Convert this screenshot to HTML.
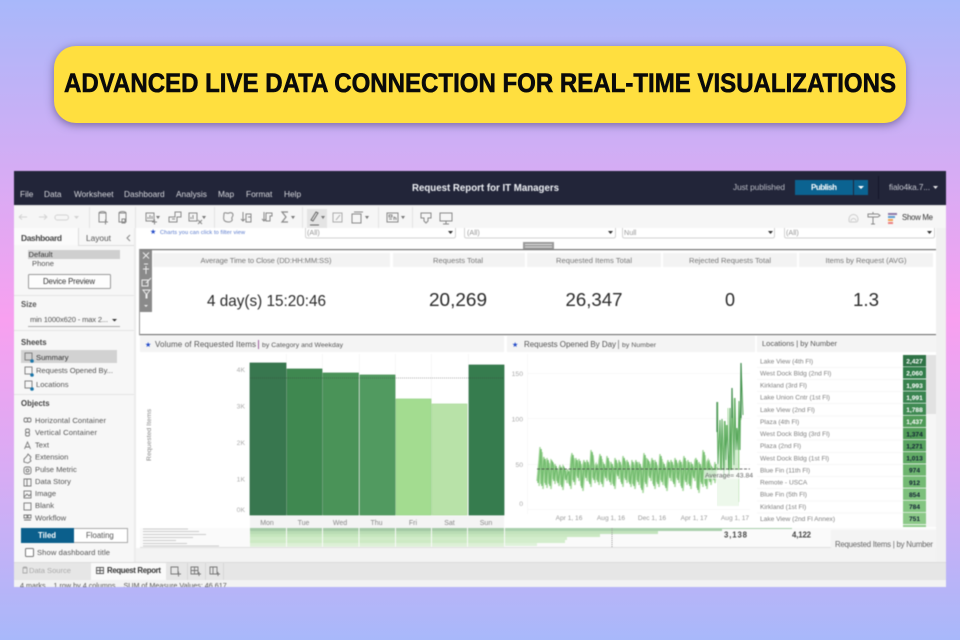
<!DOCTYPE html>
<html><head><meta charset="utf-8"><title>Advanced live data connection</title>
<style>
html,body{margin:0;padding:0;width:960px;height:640px;overflow:hidden}
body{background:linear-gradient(180deg,#a8b8fa 0%,#d6acf4 27%,#f8a0f0 50%,#d6acf4 75%,#a8b8fa 100%);position:relative;font-family:"Liberation Sans",sans-serif}
#banner{position:absolute;left:54px;top:46px;width:852px;height:77px;border-radius:22px;background:#ffdf3f;box-shadow:0 2px 9px rgba(50,40,90,.55)}
svg{position:absolute;left:0;top:0}
text{font-family:"Liberation Sans",sans-serif}
.m{fill:#d8d9de;font-size:8.3px}
.g{fill:#555;font-size:7.6px}
.d{fill:#333;font-size:7.6px}
.k{fill:#777;font-size:7.6px;text-anchor:middle}
.v{fill:#2a2a2a;font-size:18px;text-anchor:middle}
.a{fill:#aaa;font-size:6.8px;text-anchor:end}
.w{fill:#888;font-size:7px;text-anchor:middle}
.x{fill:#999;font-size:6.6px;text-anchor:middle}
.l{fill:#808080;font-size:6.6px}
.n{font-size:6.6px;font-weight:bold;text-anchor:middle}
.i{fill:none;stroke:#888;stroke-width:1}
.o{fill:none;stroke:#777;stroke-width:.9}
</style></head><body>
<div id="banner"></div>
<svg width="960" height="640" viewBox="0 0 960 640">
<text x="64" y="92" textLength="832" lengthAdjust="spacingAndGlyphs" style="font-size:26.500px;font-weight:bold;fill:#0a0a0a;stroke:#0a0a0a;stroke-width:.6">ADVANCED LIVE DATA CONNECTION FOR REAL-TIME VISUALIZATIONS</text>

<g style="filter:blur(.45px)">
<rect x="14" y="171" width="932" height="416" fill="#f3f3f3"/>
<rect x="14" y="171" width="932" height="34" fill="#222539"/>
<g>
<text class="m" x="20" y="197">File</text><text class="m" x="44" y="197">Data</text><text class="m" x="74" y="197">Worksheet</text><text class="m" x="124" y="197">Dashboard</text><text class="m" x="176" y="197">Analysis</text><text class="m" x="218" y="197">Map</text><text class="m" x="246" y="197">Format</text><text class="m" x="284" y="197">Help</text>
<text x="412" y="191" textLength="147" lengthAdjust="spacingAndGlyphs" style="font-size:10.5px;font-weight:bold;fill:#eef0f4">Request Report for IT Managers</text>
<text x="733" y="190" textLength="52" style="font-size:8.3px;fill:#b9bbc4">Just published</text>
<rect x="795" y="180" width="58" height="15" fill="#0b6391"/><rect x="854" y="180" width="14" height="15" fill="#0b6391"/>
<text x="811" y="190" textLength="26" style="font-size:8px;font-weight:bold;fill:#fff">Publish</text>
<path d="M858 186h6l-3 3z" fill="#fff"/>
<rect x="878" y="176" width="1" height="23" fill="#14162a"/>
<text x="889" y="190" textLength="41" style="font-size:8.2px;fill:#c8cad2">fialo4ka.7...</text>
<path d="M933 186h5l-2.500 3z" fill="#e4e4e8"/>
</g>
<rect x="14" y="205" width="932" height="23" fill="#f6f6f6"/>
<rect x="14" y="205" width="932" height="1" fill="#e8e8e8"/>
<g fill="#e3e3e3"><rect x="89" y="207" width="1" height="21"/><rect x="135" y="207" width="1" height="21"/><rect x="214" y="207" width="1" height="21"/><rect x="302" y="207" width="1" height="21"/><rect x="378" y="207" width="1" height="21"/><rect x="412" y="207" width="1" height="21"/></g>
<rect x="307" y="209" width="20" height="19" fill="#e4e4e4"/>
<g class="i" style="stroke:#d2d2d2">
<path d="M19 217h8M19 217l3-2.500M19 217l3 2.500M39 217h8M47 217l-3-2.500M47 217l-3 2.500M57 215h9a2 2 0 0 1 0 5h-8a2 2 0 0 1-1-5"/>
</g>
<path d="M74 216h5l-2.500 3z" fill="#d2d2d2"/>
<g class="i">
<path d="M99 213h7v9h-7zM99 213a3.500 1.500 0 0 1 7 0M103 222h5M105.500 219.500v5"/>
<path d="M119 213h7v9h-7zM119 213a3.500 1.500 0 0 1 7 0M122 219h3v4h-3z"/>
<path d="M146 213h8v8h-8zM148 219v-2M150 219v-4M152 219v-3M152 222h5M154.500 219.500v5"/>
<path d="M169 217h6v-5h6v5h-4v5h-8zM172 219h3"/>
<path d="M189 213h8v8h-8zM191 219v-2M193 219v-4M198 220l4 4M202 220l-4 4"/>
<path d="M224 213c2-1 3 1 5 0s4 0 4 2-2 2-1 4-2 3-3 3-4 0-5-2 0-3 0-7"/>
<path d="M243 212v9M241 219l2 2 2-2M246 214h5v8h-5zM248 217h3"/>
<path d="M264 212v9M262 219l2 2 2-2M266 213h6v3h-2v5h-4z"/>
<path d="M288 212h-6l4 5-4 5h6" stroke-width="1.200"/>
<path d="M311 220l5-8 2 1-5 8zM310 225h9" stroke="#666"/>
<path d="M333 213h9v9h-9zM336 220l4-5" stroke="#aaa"/>
<path d="M352 214h9v9h-9zM354 212h9"/>
<path d="M387 213h11v9h-11zM389 215h3v2h-3zM389 219h3M394 220v-3l2 1v2"/>
<path d="M421 213h10v5h-3v3l-2 2-2-2v-3h-3z"/>
<path d="M440 213h12v8h-12zM446 221v3M443 224h6"/>
<path d="M849 219a4.500 4.500 0 0 1 9 0c0 2-1 3-2 3h-6c-1 0-1-1-1-3zM851 221a2.500 2.500 0 0 1 5 0" stroke="#ccc"/>
<path d="M868 214h10l2 1.500-2 1.500h-10zM873 212v2M873 217v7M871 224h4"/>
</g>
<g fill="#777"><path d="M156 216h4l-2 3zM202 216h4l-2 3zM291 216h4l-2 3zM321 216h4l-2 3zM365 216h4l-2 3zM401 216h4l-2 3z"/></g>
<rect x="888" y="213" width="9" height="2" fill="#8c78a8"/><rect x="888" y="216" width="7" height="2" fill="#5b9bd0"/><rect x="888" y="219" width="5" height="2" fill="#f0a050"/><rect x="888" y="222" width="5" height="2" fill="#ec8080"/>
<text x="902" y="220" textLength="31" class="d" style="font-size:7.800px">Show Me</text>

<rect x="14" y="228" width="121" height="334" fill="#f7f7f7"/>
<rect x="134" y="228" width="2" height="334" fill="#ececec"/>
<rect x="14" y="228" width="64" height="17" fill="#fbfbfb"/>
<rect x="78" y="228" width="1" height="17" fill="#ddd"/>
<rect x="78" y="245" width="56" height="1" fill="#ddd"/>
<text x="21" y="241" textLength="41" style="font-size:8.400px;font-weight:bold;fill:#444">Dashboard</text>
<text x="86" y="241" textLength="25" style="font-size:8.400px;fill:#555">Layout</text>
<path d="M130 235l-3 3 3 3" class="i"/>
<rect x="28" y="250" width="92" height="9" fill="#cfcfcf"/>
<text class="d" x="28.500" y="257">Default</text><text class="g" x="32" y="266">Phone</text>
<rect x="28.500" y="274.500" width="82" height="14" rx="1" fill="#fdfdfd" stroke="#999"/>
<text x="43" y="284" textLength="52" style="font-size:7.800px;fill:#333">Device Preview</text>
<rect x="14" y="295" width="120" height="1" fill="#e4e4e4"/>
<text x="21" y="307" style="font-size:7.800px;font-weight:bold;fill:#555">Size</text>
<text class="g" x="30" y="322" textLength="78">min 1000x620 - max 2...</text>
<path d="M112 319h5l-2.500 2.500z" fill="#333"/>
<rect x="28" y="326" width="92" height="1" fill="#aaa"/>
<rect x="14" y="330" width="120" height="1" fill="#e4e4e4"/>
<text x="21" y="345" style="font-size:7.800px;font-weight:bold;fill:#444">Sheets</text>
<rect x="21" y="350" width="96" height="13" fill="#d2d2d2"/>
<text class="d" x="36" y="360">Summary</text><text class="g" x="36" y="373" textLength="77">Requests Opened By...</text><text class="g" x="36" y="387">Locations</text>
<g class="o"><rect x="25" y="353" width="7" height="7"/><rect x="25" y="367" width="7" height="7"/><rect x="25" y="381" width="7" height="7"/></g>
<circle cx="32" cy="361" r="1.800" fill="#1a75a8"/><circle cx="32" cy="375" r="1.800" fill="#1a75a8"/><circle cx="32" cy="389" r="1.800" fill="#1a75a8"/>
<rect x="14" y="394" width="120" height="1" fill="#e4e4e4"/>
<text x="21" y="406" style="font-size:7.800px;font-weight:bold;fill:#444">Objects</text>
<g class="g">
<text x="35" y="423" textLength="71">Horizontal Container</text><text x="35" y="435" textLength="62">Vertical Container</text><text x="35" y="447.500">Text</text><text x="35" y="459.500">Extension</text><text x="35" y="472">Pulse Metric</text><text x="35" y="484">Data Story</text><text x="35" y="496">Image</text><text x="35" y="508">Blank</text><text x="35" y="520.500">Workflow</text>
</g>
<g class="o">
<rect x="24" y="418" width="3.500" height="4" rx="1.500"/><rect x="27.500" y="418" width="3.500" height="4" rx="1.500"/>
<rect x="25.500" y="429" width="4" height="3.500" rx="1.500"/><rect x="25.500" y="432.500" width="4" height="3.500" rx="1.500"/>
<path d="M24.500 449l3-7 3 7M25.500 447h4"/>
<path d="M24 459l3-3 1-2 3 3-1 2 1 2-3 2-4-1z"/>
<rect x="24" y="467" width="7" height="7" rx="2"/><circle cx="27.500" cy="470.500" r="1.500"/>
<path d="M24 479h3v7h-3zM27 479h4v7h-4z"/>
<rect x="24" y="491" width="7" height="7"/><path d="M24 497l3-3 2 2 2-2"/>
<rect x="24" y="503" width="7" height="7"/>
<path d="M24 515h3v3h-3zM28 515h3v3h-3zM24 520h7"/>
</g>
<rect x="21.500" y="528.500" width="106" height="14" fill="#fff" stroke="#aaa"/>
<rect x="21" y="528" width="53" height="15" fill="#0b5f8c"/>
<text x="38" y="538" style="font-size:7.800px;font-weight:bold;fill:#fff">Tiled</text>
<text x="86" y="538" style="font-size:7.800px;fill:#555">Floating</text>
<rect x="25.500" y="548.500" width="8" height="8" rx="1" fill="#fff" stroke="#777"/>
<text class="g" x="37" y="555" textLength="73">Show dashboard title</text>

<rect x="14" y="562" width="932" height="18" fill="#e6e6e6"/>
<rect x="14" y="562" width="932" height="1" fill="#dcdcdc"/>
<rect x="14" y="580" width="932" height="7" fill="#f3f3f3"/>
<rect x="91" y="563" width="75" height="17" fill="#fafafa"/>
<text x="29" y="573" textLength="42" style="font-size:7.600px;fill:#aaa">Data Source</text>
<path d="M23 568h4v5h-4zM23 568a2 1 0 0 1 4 0" class="o" style="stroke:#aaa"/>
<path d="M96.500 567.500h7v6h-7zM100 567.500v6M96.500 570.500h7" class="o" style="stroke:#555"/>
<text x="107" y="573" textLength="54" style="font-size:7.800px;font-weight:bold;fill:#333">Request Report</text>
<g class="o"><path d="M171 567h7v7h-7zM176 574h5M178.500 571.500v5"/><path d="M191 567h7v7h-7zM194.500 567v7M191 570.500h7M197 574h4M199 572v4"/><path d="M210 567h3v7h-3zM213 567h4v7h-4zM216 574h4M218 572v4"/></g>
<g fill="#d6d6d6"><rect x="187" y="563" width="1" height="17"/><rect x="205" y="563" width="1" height="17"/><rect x="223" y="563" width="1" height="17"/></g>
<svg x="14" y="580" width="400" height="7" viewBox="14 580 400 7"><text x="20" y="588" style="font-size:7.200px;fill:#555" xml:space="preserve">4 marks    1 row by 4 columns    SUM of Measure Values: 46,617</text></svg>

<rect x="136" y="228" width="800" height="320" fill="#fff"/>
<rect x="936" y="228" width="10" height="334" fill="#f1f1f1"/>
<text x="150" y="234" style="font-size:6.800px;fill:#1f48c8">★</text>
<text x="160" y="234" textLength="85" style="font-size:5.600px;fill:#5577cc">Charts you can click to filter view</text>
<g fill="none" stroke="#d2d2d2"><path d="M305.500 228v8q0 2 2 2h146q2 0 2-2v-8M464.500 228v8q0 2 2 2h147q2 0 2-2v-8M622.500 228v8q0 2 2 2h148q2 0 2-2v-8M784.500 228v8q0 2 2 2h146q2 0 2-2v-8"/></g>
<g style="font-size:7.200px;fill:#999"><text x="307" y="235">(All)</text><text x="467" y="235">(All)</text><text x="624" y="235">Null</text><text x="786" y="235">(All)</text></g>
<path d="M448 231h5l-2.500 3zM608 231h5l-2.500 3zM768 231h5l-2.500 3zM927 231h5l-2.500 3z" fill="#333"/>
<rect x="523" y="242" width="31" height="7" fill="#9a9a9a"/><rect x="525" y="244" width="27" height="1" fill="#ddd"/><rect x="525" y="246.500" width="27" height="1" fill="#ddd"/>

<rect x="139" y="249" width="797" height="1.200" fill="#777"/>
<rect x="139" y="334" width="797" height="1.200" fill="#777"/>
<rect x="139" y="249" width="1" height="86" fill="#999"/>
<rect x="140" y="250" width="12" height="62" fill="#8a8a8a"/>
<g fill="none" stroke="#eee" stroke-width="1"><path d="M143 252.500l6 6M149 252.500l-6 6M146 266v8M143 269h6M144 264h4M142 280h6v6h-6zM146 283l5-5M143 290h7l-3 4v4l-1 0v-4z"/></g>
<path d="M144 305h4l-2 2z" fill="#eee"/>
<g fill="#f3f3f3"><rect x="153" y="253" width="237" height="14"/><rect x="393" y="253" width="132" height="14"/><rect x="527" y="253" width="134" height="14"/><rect x="663" y="253" width="134" height="14"/><rect x="799" y="253" width="134" height="14"/></g>
<text class="k" x="266" y="263" textLength="131">Average Time to Close (DD:HH:MM:SS)</text>
<text class="k" x="458" y="263" textLength="50">Requests Total</text>
<text class="k" x="594" y="263" textLength="76">Requested Items Total</text>
<text class="k" x="730" y="263" textLength="82">Rejected Requests Total</text>
<text class="k" x="866" y="263" textLength="81">Items by Request (AVG)</text>
<text class="v" x="266.500" y="306" textLength="119" lengthAdjust="spacingAndGlyphs" style="font-size:16px">4 day(s) 15:20:46</text>
<text class="v" x="458" y="306" textLength="58" lengthAdjust="spacingAndGlyphs">20,269</text>
<text class="v" x="594" y="306" textLength="57" lengthAdjust="spacingAndGlyphs">26,347</text>
<text class="v" x="730" y="306">0</text>
<text class="v" x="866" y="306" textLength="26" lengthAdjust="spacingAndGlyphs">1.3</text>

<g fill="#f4f4f4"><rect x="140" y="336" width="364" height="16"/><rect x="507" y="336" width="248" height="16"/><rect x="757" y="336" width="179" height="16"/></g>
<text x="145" y="347" style="font-size:7px;fill:#1f48c8">★</text>
<text x="155" y="347" textLength="101" style="font-size:8px;fill:#555">Volume of Requested Items</text>
<rect x="258" y="340" width="1" height="9" fill="#a060a0"/>
<text x="262" y="347" textLength="81" style="font-size:6.800px;fill:#555">by Category and Weekday</text>
<text x="512" y="347" style="font-size:7px;fill:#1f48c8">★</text>
<text x="524" y="347" textLength="92" style="font-size:8px;fill:#555">Requests Opened By Day</text>
<rect x="618" y="340" width="1" height="9" fill="#999"/>
<text x="622" y="347" textLength="34" style="font-size:6.800px;fill:#555">by Number</text>
<text x="762" y="346" textLength="75" style="font-size:7.500px;fill:#555">Locations | by Number</text>

<g fill="#f4f4f4"><rect x="286" y="354" width=".7" height="162"/><rect x="322" y="354" width=".7" height="162"/><rect x="359" y="354" width=".7" height="162"/><rect x="395" y="354" width=".7" height="162"/><rect x="431" y="354" width=".7" height="162"/><rect x="468" y="354" width=".7" height="162"/></g>
<rect x="250" y="363" width="36" height="152" fill="#38774f" stroke="#2a6a40" stroke-width=".7"/>
<rect x="287" y="369" width="35" height="146" fill="#3f8850" stroke="#357c46" stroke-width=".7"/>
<rect x="323" y="373" width="35.500" height="142" fill="#4a9358" stroke="#3f884e" stroke-width=".7"/>
<rect x="360" y="375" width="35" height="140" fill="#519a60" stroke="#428c50" stroke-width=".7"/>
<rect x="396" y="399" width="35" height="116" fill="#a3dc90" stroke="#90cf80" stroke-width=".7"/>
<rect x="432" y="404" width="35" height="111" fill="#b8e2a8" stroke="#a8d898" stroke-width=".7"/>
<rect x="469" y="365" width="35" height="150" fill="#367c4e" stroke="#2a6e42" stroke-width=".7"/>
<path d="M250 378h254" stroke="#333" stroke-opacity=".4" stroke-dasharray="1 1" fill="none"/>
<text class="a" x="245" y="372">4K</text><text class="a" x="245" y="408.500">3K</text><text class="a" x="245" y="445">2K</text><text class="a" x="245" y="481.500">1K</text><text class="a" x="245" y="512">0K</text>
<text transform="translate(151,435) rotate(-90)" text-anchor="middle" style="font-size:6.800px;fill:#888" textLength="52">Requested Items</text>
<rect x="250" y="516" width="254" height="12" fill="#f4f4f4"/>
<text class="w" x="267" y="525">Mon</text><text class="w" x="303.500" y="525">Tue</text><text class="w" x="340" y="525">Wed</text><text class="w" x="376.500" y="525">Thu</text><text class="w" x="413" y="525">Fri</text><text class="w" x="449.500" y="525">Sat</text><text class="w" x="486" y="525">Sun</text>

<rect x="140" y="528" width="796" height="19.500" fill="#fafafa"/>
<rect x="140" y="547" width="796" height="1" fill="#e0e0e0"/>
<g fill="#ccc"><rect x="143" y="528.500" width="45" height="1"/><rect x="143" y="531" width="56" height="1"/><rect x="143" y="534" width="63" height="1"/><rect x="143" y="537" width="50" height="1"/><rect x="143" y="540" width="33" height="1"/><rect x="143" y="543" width="44" height="1"/><rect x="143" y="545.500" width="76" height="1"/></g>
<rect x="250" y="528" width="254" height="3" fill="#a3c9a5"/><rect x="250" y="531" width="254" height="3" fill="#b9dcb4"/><rect x="250" y="534" width="254" height="3" fill="#c5e6bd"/><rect x="250" y="537" width="254" height="3" fill="#d0ebc8"/><rect x="250" y="540" width="254" height="3" fill="#cdeac4"/><rect x="250" y="543" width="254" height="3" fill="#dcf0d5"/><rect x="250" y="546" width="254" height="1" fill="#e6f4e0"/>
<g fill="#fafafa"><rect x="286" y="528" width="1" height="19"/><rect x="322" y="528" width="1" height="19"/><rect x="358.500" y="528" width="1" height="19"/><rect x="395" y="528" width="1" height="19"/><rect x="431" y="528" width="1" height="19"/><rect x="467" y="528" width="1" height="19"/></g>
<rect x="505" y="528" width="217" height="3" fill="#a9d0ac"/><rect x="505" y="531" width="153" height="3" fill="#c3e3bd"/><rect x="505" y="534" width="95" height="3" fill="#cbe8c3"/><rect x="505" y="537" width="62" height="3" fill="#d3edcc"/><rect x="505" y="540" width="60" height="3" fill="#d3edcc"/><rect x="505" y="543" width="32" height="3" fill="#dff2da"/>
<path d="M612 528v19" stroke="#999" stroke-dasharray="1 1"/>
<rect x="722" y="530" width="110" height="17" fill="#fafafa"/>
<rect x="722" y="528" width="70" height="1" fill="#a9d0ac"/>
<text x="724" y="537.500" textLength="23" style="font-size:7.800px;font-weight:bold;fill:#444">3,138</text>
<text x="792" y="537.500" textLength="19" style="font-size:7.800px;font-weight:bold;fill:#444">4,122</text>
<rect x="831" y="530" width="105" height="18" fill="#f4f4f4"/>
<text x="835" y="547" textLength="98" style="font-size:7.800px;fill:#666">Requested Items | by Number</text>

<g fill="#f8f8f8"><rect x="527" y="373" width="223" height="1"/><rect x="527" y="418" width="223" height="1"/><rect x="527" y="464" width="223" height="1"/><rect x="527" y="509" width="223" height="1"/></g>
<rect x="527" y="354" width="1" height="160" fill="#f8f8f8"/>
<text class="a" x="523" y="376">150</text><text class="a" x="523" y="421.500">100</text><text class="a" x="523" y="467">50</text><text class="a" x="523" y="506">0</text>
<text class="x" x="569" y="520">Apr 1, 16</text><text class="x" x="611" y="520">Aug 1, 16</text><text class="x" x="652" y="520">Dec 1, 16</text><text class="x" x="694" y="520">Apr 1, 17</text><text class="x" x="735" y="520">Aug 1, 17</text>
<defs><polyline id="ln" fill="none" points="538,483 540,462 541,449 542,486 544,461 545,459 546,485 548,460 549,470 550,486 552,462 553,463 554,481 556,466 557,472 558,483 560,470 561,467 562,487 564,468 565,470 566,480 568,472 569,472 570,486 572,460 573,455 574,482 576,464 577,460 578,478 580,461 581,470 582,488 584,466 585,462 586,478 588,462 589,470 590,484 592,452 593,462 594,480 596,468 597,466 598,482 600,462 601,456 602,484 604,464 605,470 606,478 608,458 609,470 610,482 612,464 613,470 614,486 616,460 617,468 618,476 620,462 621,470 622,484 624,458 625,464 626,480 628,462 629,468 630,484 632,470 633,462 634,486 636,466 637,462 638,482 640,464 641,470 642,490 644,466 645,455 646,484 648,461 649,462 650,478 652,466 653,460 654,486 656,462 657,470 658,484 660,468 661,456 662,482 664,464 665,470 666,488 668,466 669,462 670,478 672,462 673,470 674,484 676,460 677,466 678,480 680,464 681,462 682,488 684,466 685,458 686,482 688,470 689,462 690,486 692,464 693,470 694,478 696,462 697,460 698,490 700,464 701,470 702,484 704,452 705,470 706,486 708,464 709,462 710,482 712,468 713,470 714,480 716,464"/></defs>
<use href="#ln" transform="translate(1,3)" stroke="#b0dea8" stroke-width="1.600"/>
<use href="#ln" transform="translate(-1,-2)" stroke="#a0d598" stroke-width="1.300"/>
<use href="#ln" stroke="#74bd70" stroke-width="1.400"/>
<path d="M718 470V506M720 470V506M722 470V506M724 478V506M726 470V506M728 470V506M730 470V506M732 470V506M734 470V506M736 470V506M738 470V506M739 470V502" fill="none" stroke="#d8efd3" stroke-width=".9"/>
<path d="M718 402V470M720 420V470M722 419V470M724 421V470M726 425V470M728 408V470M730 418V470M732 388V470M734 398V470M736 428V470M738 430V470M739 401V470M741 363V420" fill="none" stroke="#a8dba0" stroke-width="1"/>
<polyline fill="none" stroke="#5aa95d" stroke-width="1" points="717,402 718,464 720,420 721,470 722,419 724,478 725,421 726,460 727,425 729,475 730,408 731,470 732,388 734,465 735,398 736,450 737,428 738,450 739,401 740,450 741,363 743,415"/>
<path d="M741 363v55M732 388v30M717 402v30" stroke="#3d8a4c" stroke-width="1.200" fill="none"/>
<path d="M537 469h213" stroke="#444" stroke-opacity=".75" stroke-dasharray="3 1.500" fill="none"/>
<rect x="704" y="470" width="48" height="9" fill="#fff" fill-opacity=".6"/>
<text x="705" y="477.500" textLength="48" style="font-size:6.800px;fill:#666">Average= 43.84</text>

<rect x="926" y="355" width="10" height="59" fill="#e2e2e2"/>
<rect x="926" y="414" width="10" height="113" fill="#f6f6f6"/>
<g fill="#f4f4f4"><rect x="757" y="367" width="146" height=".8"/><rect x="757" y="379" width="146" height=".8"/><rect x="757" y="391" width="146" height=".8"/><rect x="757" y="403" width="146" height=".8"/><rect x="757" y="415.500" width="146" height=".8"/><rect x="757" y="427.500" width="146" height=".8"/><rect x="757" y="439.500" width="146" height=".8"/><rect x="757" y="452" width="146" height=".8"/><rect x="757" y="464" width="146" height=".8"/><rect x="757" y="476" width="146" height=".8"/><rect x="757" y="488" width="146" height=".8"/><rect x="757" y="500.500" width="146" height=".8"/><rect x="757" y="512.500" width="146" height=".8"/></g>
<rect x="903" y="355" width="23" height="172" fill="#fff"/>
<rect x="903" y="355" width="23" height="11.500" fill="#2f7346"/><rect x="903" y="367" width="23" height="11.500" fill="#317d4a"/><rect x="903" y="379.300" width="23" height="11.500" fill="#38824e"/><rect x="903" y="391.400" width="23" height="11.500" fill="#3a8450"/><rect x="903" y="403.500" width="23" height="11.500" fill="#3f8a52"/><rect x="903" y="415.600" width="23" height="11.500" fill="#4f9a58"/><rect x="903" y="427.800" width="23" height="11.500" fill="#519c58"/><rect x="903" y="439.900" width="23" height="11.500" fill="#58a35f"/><rect x="903" y="452" width="23" height="11.500" fill="#62ab66"/><rect x="903" y="464.200" width="23" height="11.500" fill="#6eb56f"/><rect x="903" y="476.300" width="23" height="11.500" fill="#74ba74"/><rect x="903" y="488.500" width="23" height="11.500" fill="#7dc07c"/><rect x="903" y="500.600" width="23" height="11.500" fill="#84c582"/><rect x="903" y="512.700" width="23" height="11.500" fill="#8cc988"/><rect x="903" y="525" width="23" height="2" fill="#90cc8c"/>
<g class="l"><text x="760" y="363.500">Lake View (4th Fl)</text><text x="760" y="375.500">West Dock Bldg (2nd Fl)</text><text x="760" y="387.500">Kirkland (3rd Fl)</text><text x="760" y="399.700">Lake Union Cntr (1st Fl)</text><text x="760" y="411.800">Lake View (2nd Fl)</text><text x="760" y="424">Plaza (4th Fl)</text><text x="760" y="436">West Dock Bldg (3rd Fl)</text><text x="760" y="448">Plaza (2nd Fl)</text><text x="760" y="460.300">West Dock Bldg (1st Fl)</text><text x="760" y="472.500">Blue Fin (11th Fl)</text><text x="760" y="484.500">Remote - USCA</text><text x="760" y="496.700">Blue Fin (5th Fl)</text><text x="760" y="508.800">Kirkland (1st Fl)</text><text x="760" y="521">Lake View (2nd Fl Annex)</text></g>
<g class="n" fill="#fff"><text x="914.500" y="363.500">2,427</text><text x="914.500" y="375.500">2,060</text><text x="914.500" y="387.800">1,993</text><text x="914.500" y="400">1,991</text><text x="914.500" y="412">1,788</text><text x="914.500" y="424">1,437</text></g>
<g class="n" fill="#123"><text x="914.500" y="436.300">1,374</text><text x="914.500" y="448.400">1,271</text><text x="914.500" y="460.500">1,013</text><text x="914.500" y="472.700">974</text><text x="914.500" y="484.800">912</text><text x="914.500" y="497">854</text><text x="914.500" y="509">784</text><text x="914.500" y="521.200">751</text></g>
</g>
</svg>
</body></html>
